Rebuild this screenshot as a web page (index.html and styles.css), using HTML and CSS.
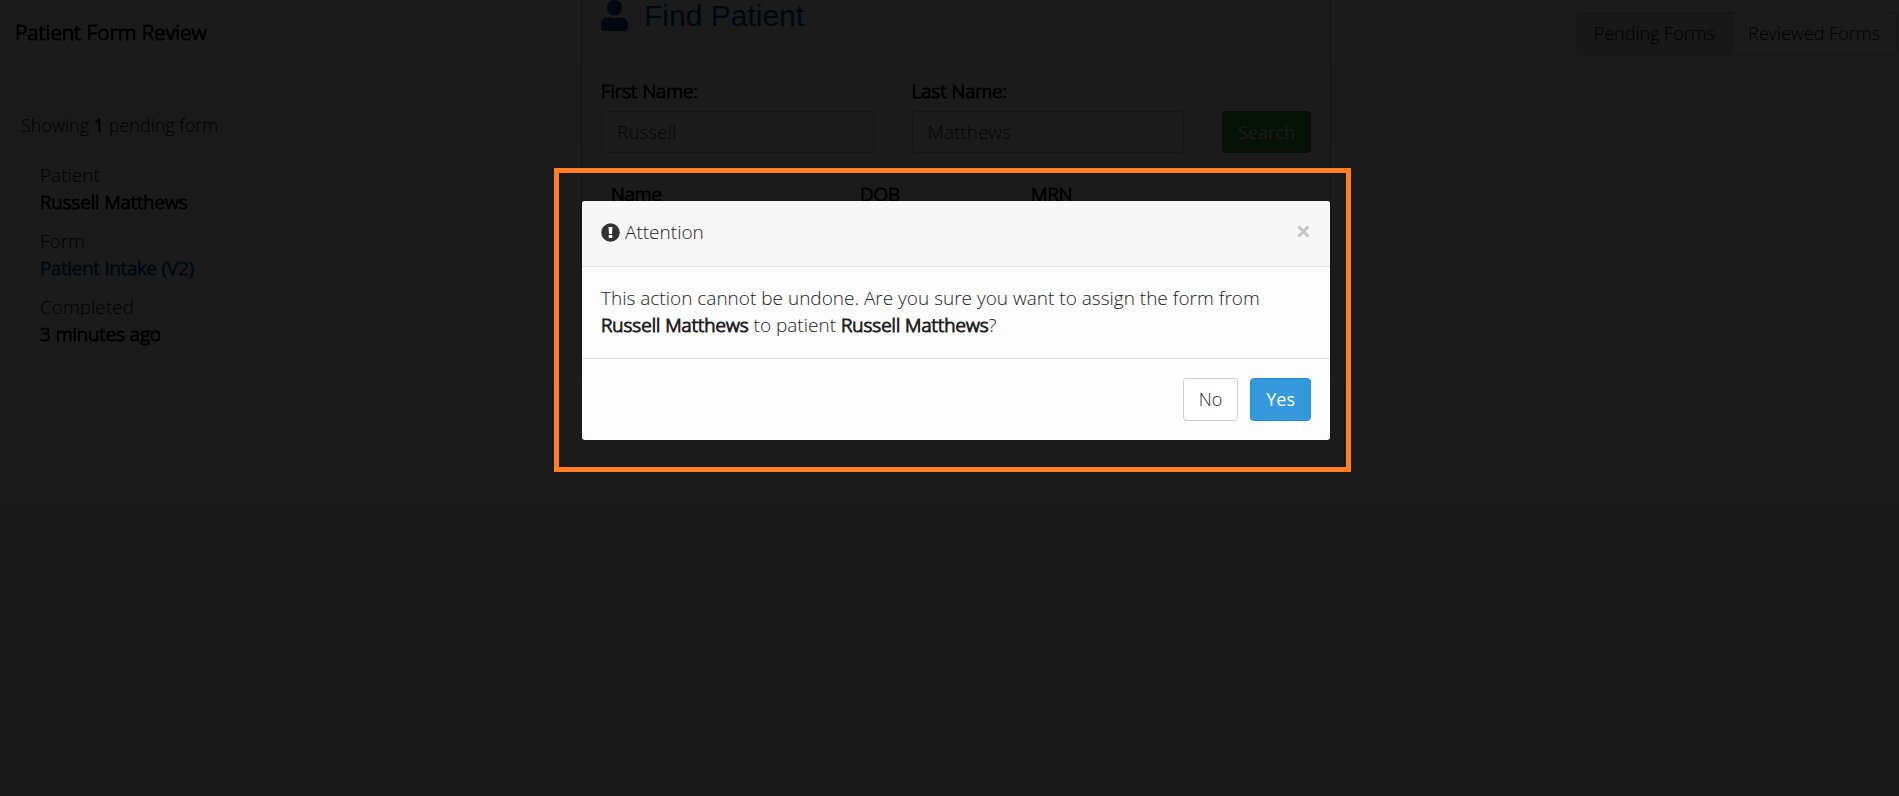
FILE: index.html
```html
<!DOCTYPE html>
<html lang="en">
<head>
<meta charset="utf-8">
<title>Patient Form Review</title>
<link rel="stylesheet" href="styles.css">
</head>
<body>
<div class="page">
  <header class="topbar">
    <h1 class="page-title">Patient Form Review</h1>
    <div class="btn-group">
      <button type="button" class="btn group-btn active">Pending Forms</button>
      <button type="button" class="btn group-btn">Reviewed Forms</button>
    </div>
  </header>
  <main class="content">
    <p class="count">Showing <strong>1</strong> pending form</p>
    <dl class="card">
      <div class="field"><dt>Patient</dt><dd>Russell Matthews</dd></div>
      <div class="field"><dt>Form</dt><dd><a href="#">Patient Intake (V2)</a></dd></div>
      <div class="field"><dt>Completed</dt><dd>3 minutes ago</dd></div>
    </dl>
  </main>
</div>

<div class="layer">
  <section class="find">
    <h2 class="find-head">
      <svg class="user-icon" viewBox="0 0 27 31" aria-hidden="true"><circle cx="13.500" cy="7.700" r="7.700"/><path d="M7.500 17.200C9 17.200 10.500 18.200 13.500 18.200S18 17.200 19.500 17.200C24 17.200 27 20.500 27 25V28Q27 31 24 31H3Q0 31 0 28V25C0 20.500 3 17.200 7.500 17.200Z"/></svg>
      <span>Find Patient</span>
    </h2>
    <form class="find-form">
      <div class="form-col">
        <label for="first">First Name:</label>
        <input id="first" type="text" value="Russell">
      </div>
      <div class="form-col">
        <label for="last">Last Name:</label>
        <input id="last" type="text" value="Matthews">
      </div>
      <button type="button" class="btn search">Search</button>
    </form>
    <table class="results">
      <thead><tr><th class="col-name">Name</th><th class="col-dob">DOB</th><th>MRN</th></tr></thead>
    </table>
  </section>
</div>

<div class="layer backdrop"></div>

<div class="layer front">
  <div class="highlight">
    <div class="modal" role="dialog" aria-labelledby="modal-title">
      <div class="modal-head">
        <svg class="alert-icon" viewBox="0 0 19 19" aria-hidden="true"><circle cx="9.500" cy="9.500" r="9.300" fill="#333"/><path d="M7.500 4H11.500L11 11H8ZM7.700 12H11.300V15H7.700Z" fill="#f7f7f7"/></svg>
        <h3 class="modal-title" id="modal-title">Attention</h3>
        <button type="button" class="close" aria-label="Close"><svg viewBox="0 0 13 13" aria-hidden="true"><path d="M1.500 1.500L11.500 11.500M11.500 1.500L1.500 11.500"/></svg></button>
      </div>
      <p class="modal-body">This action cannot be undone. Are you sure you want to assign the form from <strong>Russell Matthews</strong> to patient <strong>Russell Matthews</strong>?</p>
      <div class="modal-foot">
        <button type="button" class="btn">No</button>
        <button type="button" class="btn primary">Yes</button>
      </div>
    </div>
  </div>
</div>
</body>
</html>
```

FILE: styles.css
```css
* { box-sizing: border-box; }

body {
  margin: 0;
  overflow: hidden;
  background: #f0f0f0;
  color: #222;
  font: 300 19px/27px "Open Sans", sans-serif;
}

h1, h2, h3, p, dl, dd { margin: 0; }

input, button { font: inherit; color: inherit; }

/* Heavier look on the light face, keeping its widths */
strong, dd, label, th, .page-title {
  font-weight: 300;
  -webkit-text-stroke: 1px currentColor;
}

.page { min-height: 100vh; }

.topbar {
  display: flex;
  justify-content: space-between;
  align-items: center;
  padding: 12px 2px 12px 15px;
  background: #fff;
  border-bottom: 1px solid #e8e8e8;
}

.page-title { padding-bottom: 2px; font-size: 21px; color: #000; }

.btn {
  padding: 7px 15px;
  border: 1px solid #ccc;
  border-radius: 4px;
  background: #fff;
  font-size: 18px;
  white-space: nowrap;
}

.btn-group { display: flex; color: #000; }
.group-btn { padding: 7px 16px; border-color: #b8b8b8; }
.group-btn:first-child { border-radius: 4px 0 0 4px; }
.group-btn:last-child { border-radius: 0 4px 4px 0; border-left: 0; }
.group-btn.active { background: #dcdcdc; }

.content { padding: 44px 3px 0 15px; }
.count { padding-left: 6px; color: #000; font-size: 18px; }

.card {
  padding: 22px 24px 24px;
  background: #fff;
  border: 1px solid #e8e8e8;
  border-radius: 6px;
}
.field { padding-bottom: 12px; }
dt, dd { color: #000; }
dd a { color: #0d4f92; text-decoration: none; }

.layer {
  position: absolute;
  inset: 0;
  display: flex;
  justify-content: center;
  align-items: flex-start;
  overflow: hidden;
}
.backdrop { background: rgba(0, 0, 0, 0.895); }

.find {
  width: 750px;
  margin-left: 13px;
  padding-bottom: 160px;
  background: #fff;
  border: 1px solid #bbb;
  border-top: 0;
  color: #000;
}
.find-head {
  display: flex;
  align-items: center;
  gap: 16px;
  height: 59px;
  padding: 0 19px 27px;
  border-bottom: 1px solid #e5e5e5;
  color: #00508f;
  font: 400 30px/32px "Liberation Sans", Arial, sans-serif;
}
.user-icon { width: 27px; height: 31px; fill: #00508f; }

.find-form {
  display: flex;
  align-items: flex-end;
  gap: 38px;
  padding: 19px 19px 0;
}
.form-col { flex: 1; display: flex; flex-direction: column; gap: 6px; min-width: 0; }
input {
  width: 100%;
  height: 42px;
  padding: 6px 15px;
  border: 1px solid #bbb;
  border-radius: 4px;
  background: #fff;
  color: #333;
}
.search { height: 42px; padding: 6px 15px; background: #3fa345; border-color: #3a9540; color: #fff; font-weight: 400; }

.results { width: 711px; margin: 22px 19px 0; border-collapse: collapse; table-layout: fixed; }
th { padding: 6px 10px; text-align: left; }
.col-name { width: 249px; }
.col-dob { width: 171px; }

.front { padding-top: 168px; }
.highlight {
  margin-left: 6px;
  padding: 28px 16px 27px 23px;
  border: 5px solid #ff7f27;
}
.modal {
  width: 748px;
  background: #fdfdfd;
  border-radius: 3px;
  overflow: hidden;
}
.modal-head {
  display: flex;
  align-items: center;
  gap: 5px;
  padding: 18px 19px 20px;
  background: #f7f7f7;
  border-bottom: 1px solid #e5e5e5;
}
.alert-icon { width: 19px; height: 19px; }
.modal-title { flex: 1; font: inherit; }
.close { display: flex; padding: 0 1px 2px 0; border: 0; background: none; }
.close svg { width: 13px; height: 13px; fill: none; stroke: #c6c6c6; stroke-width: 3; }
.modal-body { padding: 18px 19px 19px; }
.modal-foot {
  display: flex;
  justify-content: flex-end;
  gap: 12px;
  padding: 19px;
  border-top: 1px solid #e5e5e5;
}
.primary { background: #3498db; border-color: #258cd1; color: #fff; font-weight: 500; }
```
